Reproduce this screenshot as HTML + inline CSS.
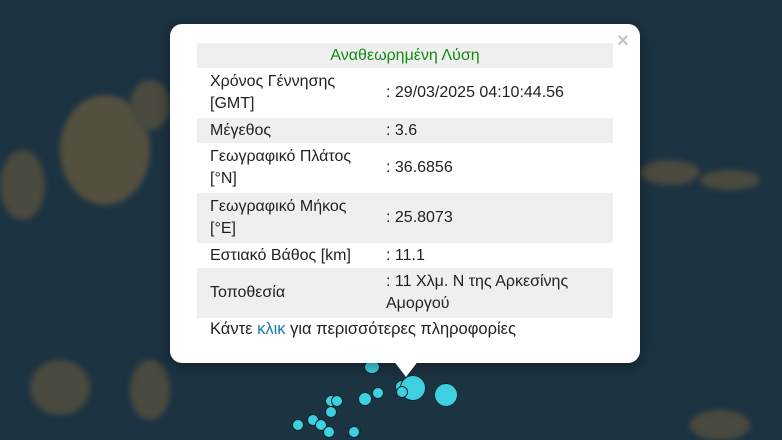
<!DOCTYPE html>
<html><head><meta charset="utf-8"><style>
body{margin:0;width:782px;height:440px;overflow:hidden;background:#1c3342;font-family:"Liberation Sans",Arial,sans-serif;position:relative}
.bl{position:absolute;border-radius:50%;background:#4a4a3e;filter:blur(3px)}
.c{position:absolute;border-radius:50%;background:#3fd0e0;border:1px solid #0c2a33;box-sizing:border-box}
.pop{position:absolute;left:170px;top:24px;width:470px;height:339px;background:#fff;border-radius:12px;box-shadow:0 3px 14px rgba(0,0,0,.4)}
.tip{position:absolute;left:393px;top:360px;width:0;height:0;border-left:13px solid transparent;border-right:13px solid transparent;border-top:17px solid #fff}
.x{position:absolute;left:617px;top:30px;color:#c3c3c3;font-size:20px;font-weight:bold}
table{position:absolute;left:197px;top:43px;width:416px;border-collapse:collapse;font-size:16px;color:#222;table-layout:fixed}
td{padding:0 0 0 13px;line-height:22px;white-space:nowrap}
td.v{padding-left:0}
tr.g{background:#efefef}
.f{position:absolute;left:210px;top:320px;font-size:16.5px;color:#222}
</style></head><body>
<div class="bl" style="left:0;top:150px;width:45px;height:70px"></div>
<div class="bl" style="left:60px;top:95px;width:90px;height:110px;background:#54503f"></div>
<div class="bl" style="left:130px;top:80px;width:40px;height:50px"></div>
<div class="bl" style="left:30px;top:360px;width:60px;height:55px"></div>
<div class="bl" style="left:130px;top:360px;width:40px;height:60px"></div>
<div class="bl" style="left:640px;top:160px;width:60px;height:25px"></div>
<div class="bl" style="left:700px;top:170px;width:60px;height:20px"></div>
<div class="bl" style="left:690px;top:410px;width:60px;height:30px"></div>
<div class="c" style="left:434px;top:383px;width:24px;height:24px"></div>
<div class="c" style="left:395px;top:380px;width:14px;height:14px"></div>
<div class="c" style="left:400px;top:375px;width:26px;height:26px"></div>
<div class="c" style="left:396px;top:386px;width:12px;height:12px"></div>
<div class="c" style="left:358px;top:392px;width:14px;height:14px"></div>
<div class="c" style="left:372px;top:387px;width:12px;height:12px"></div>
<div class="c" style="left:325px;top:395px;width:12px;height:12px"></div>
<div class="c" style="left:331px;top:395px;width:12px;height:12px"></div>
<div class="c" style="left:325px;top:406px;width:12px;height:12px"></div>
<div class="c" style="left:292px;top:419px;width:12px;height:12px"></div>
<div class="c" style="left:307px;top:414px;width:12px;height:12px"></div>
<div class="c" style="left:315px;top:419px;width:12px;height:12px"></div>
<div class="c" style="left:323px;top:426px;width:12px;height:12px"></div>
<div class="c" style="left:349px;top:425px;width:12px;height:12px;background:#3a9a3a"></div>
<div class="c" style="left:348px;top:426px;width:12px;height:12px"></div>
<div class="c" style="left:364px;top:360px;width:16px;height:14px"></div>
<div class="pop"></div><div class="tip"></div>
<div class="x">×</div>
<table>
<colgroup><col style="width:189px"><col style="width:227px"></colgroup>
<tr class="g"><td colspan="2" style="text-align:center;color:#138a13;height:25px;padding:0">Αναθεωρημένη Λύση</td></tr>
<tr style="height:50px"><td>Χρόνος Γέννησης<br>[GMT]</td><td class="v">: 29/03/2025 04:10:44.56</td></tr>
<tr class="g" style="height:25px"><td>Μέγεθος</td><td class="v">: 3.6</td></tr>
<tr style="height:50px"><td>Γεωγραφικό Πλάτος<br>[°N]</td><td class="v">: 36.6856</td></tr>
<tr class="g" style="height:50px"><td>Γεωγραφικό Μήκος<br>[°E]</td><td class="v">: 25.8073</td></tr>
<tr style="height:25px"><td>Εστιακό Βάθος [km]</td><td class="v">: 11.1</td></tr>
<tr class="g" style="height:50px"><td>Τοποθεσία</td><td class="v">: 11 Χλμ. Ν της Αρκεσίνης<br>Αμοργού</td></tr>
</table>
<div class="f">Κάντε <span style="color:#1a7ab0">κλικ</span> για περισσότερες πληροφορίες</div>
</body></html>
